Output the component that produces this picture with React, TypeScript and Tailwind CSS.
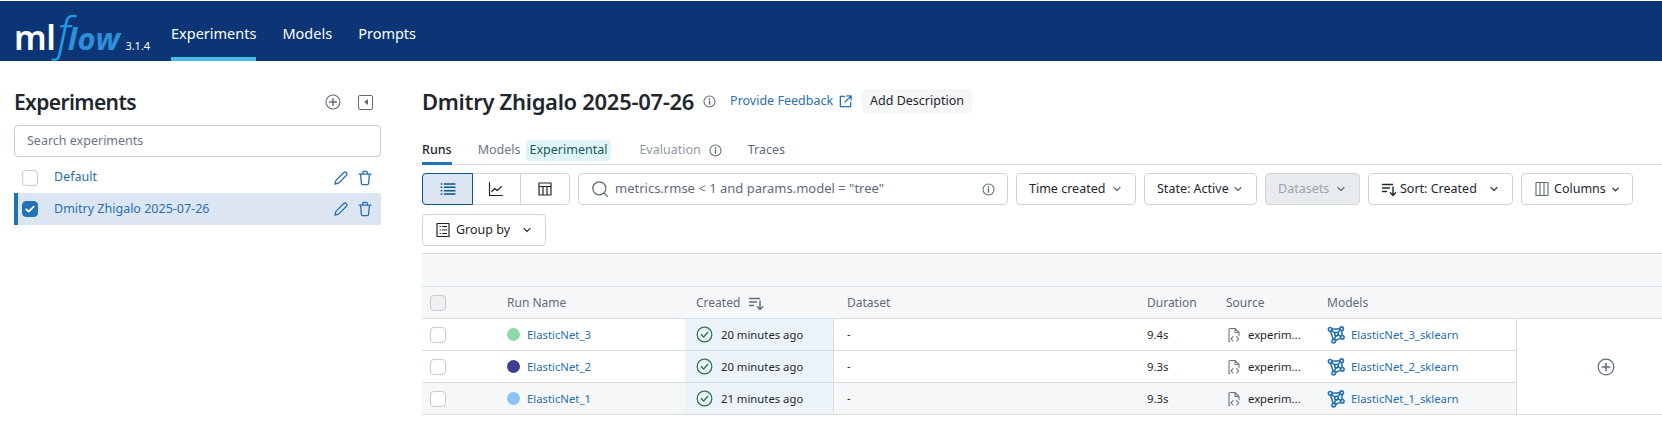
import React from "react";

const Ic = ({ s = 16, c = "currentColor", w = 1.4, children }: { s?: number; c?: string; w?: number; children: React.ReactNode }) => (
  <svg width={s} height={s} viewBox="0 0 16 16" fill="none" stroke={c} strokeWidth={w} strokeLinecap="round" strokeLinejoin="round" className="shrink-0">
    {children}
  </svg>
);

const PlusCircle = ({ s = 16 }: { s?: number }) => (
  <Ic s={s} c="#5f6b78" w={1.1}>
    <circle cx="8" cy="8" r="7" />
    <path d="M8 4.6v6.8M4.6 8h6.8" strokeWidth="1.4" />
  </Ic>
);
const Info = ({ c = "#5f6b78", s = 13 }: { c?: string; s?: number }) => (
  <Ic s={s} c={c} w={1.3}>
    <circle cx="8" cy="8" r="6.8" />
    <path d="M8 7.4v4M8 4.6v.6" strokeWidth="1.7" />
  </Ic>
);
const Chevron = ({ c = "#3f4a55", s = 12 }: { c?: string; s?: number }) => (
  <Ic s={s} c={c} w={1.8}>
    <path d="M4 6l4 4 4-4" />
  </Ic>
);
const Pencil = () => (
  <Ic s={16} c="#2a6fae" w={1.3}>
    <path d="M2 14l.9-3.6L10.8 2.5a1.6 1.6 0 0 1 2.3 0l.4.4a1.6 1.6 0 0 1 0 2.3L5.6 13.1 2 14z" />
  </Ic>
);
const Trash = () => (
  <Ic s={16} c="#2a6fae" w={1.3}>
    <path d="M2 4.2h12M5.6 4V2.8A1.5 1.5 0 0 1 7 1.3h2a1.5 1.5 0 0 1 1.4 1.5V4M3.6 4.4l.8 9a1.3 1.3 0 0 0 1.3 1.2h4.6a1.3 1.3 0 0 0 1.3-1.2l.8-9" />
  </Ic>
);
const SortIcon = ({ c = "#1f272d" }: { c?: string }) => (
  <Ic s={16} c={c} w={1.4}>
    <path d="M1.5 3.5h10M1.5 7h7M1.5 10.5h4M12 6v8.2M9.4 11.8l2.6 2.6 2.6-2.6" />
  </Ic>
);
const ModelIcon = () => (
  <Ic s={18} c="#2272b4" w={1.4}>
    <circle cx="2.8" cy="3" r="1.6" />
    <circle cx="13" cy="2.4" r="1.6" />
    <circle cx="8.4" cy="7.2" r="1.6" />
    <circle cx="13.6" cy="10" r="1.6" />
    <circle cx="6" cy="13.4" r="1.6" />
    <path d="M4.4 2.9l7-.4M4 4.2l3.2 1.9M11.8 3.6L9.5 6M9.9 8l2.3 1.2M7.7 8.8l-1.1 3M12.2 10.8l-4.7 2.1M3.2 4.6l2.3 7.2M13.1 4l.4 4.4" />
  </Ic>
);
const SourceIcon = () => (
  <Ic s={16} c="#6b7681" w={1.1}>
    <path d="M3 14.5V2.5a1 1 0 0 1 1-1h5l4 4v3M9 1.5v4h4" />
    <path d="M7 9.6L5 11.8l2 2.2M10.6 9.6l2 2.2-2 2.2M3 14.5h.8" />
  </Ic>
);
const StatusCheck = () => (
  <Ic s={17} c="#277c43" w={1.2}>
    <circle cx="8" cy="8" r="6.9" />
    <path d="M5 8.2l2.1 2.1L11 6.2" strokeWidth="1.3" />
  </Ic>
);

const Box = ({ checked = false, header = false }: { checked?: boolean; header?: boolean }) => (
  <span
    className={`flex h-4 w-4 items-center justify-center rounded-[4px] border ${
      checked ? "border-[#2272b4] bg-[#2272b4]" : header ? "border-[#c4ccd4] bg-[#eef0f2]" : "border-[#c4ccd4] bg-white"
    }`}
  >
    {checked && (
      <Ic s={12} c="#ffffff" w={2.4}>
        <path d="M3 8.4l3.2 3L13 4.8" />
      </Ic>
    )}
  </span>
);

const FilterBtn = ({ children, w, disabled = false }: { children: React.ReactNode; w: string; disabled?: boolean }) => (
  <div className={`flex h-8 items-center whitespace-nowrap rounded border border-[#cfd5db] ${w} ${disabled ? "bg-[#e8ebee] text-[#9aa3ac]" : "bg-white text-[#1f272d]"}`}>
    {children}
  </div>
);

const rows = [
  { name: "ElasticNet_3", color: "bg-[#8fd8a8]", time: "20 minutes ago", dur: "9.4s", model: "ElasticNet_3_sklearn", bg: "bg-white", h: "h-8 border-b" },
  { name: "ElasticNet_2", color: "bg-[#3c3f8f]", time: "20 minutes ago", dur: "9.3s", model: "ElasticNet_2_sklearn", bg: "bg-white", h: "h-8 border-b" },
  { name: "ElasticNet_1", color: "bg-[#8cc4f5]", time: "21 minutes ago", dur: "9.3s", model: "ElasticNet_1_sklearn", bg: "bg-[#f6f7f8]", h: "h-[31px]" },
];

export default function App() {
  return (
    <div className="h-[427px] w-[1662px] overflow-hidden bg-white text-[12.5px] text-[#1f272d]" style={{ fontFamily: '"Noto Sans", sans-serif' }}>
      <header className="flex h-[61px] items-stretch border-t border-white bg-[#0b3574] pl-[14px] text-white">
        <div className="flex w-[157px] items-baseline whitespace-nowrap pt-[12px]">
          <span className="text-[34px] font-semibold leading-[38px] tracking-[-0.5px]">ml</span>
          <span className="ml-[2px] text-[46px] font-light italic leading-[38px] text-[#1f9be2]">f</span>
          <span className="-ml-[3px] text-[31px] font-bold italic leading-[38px] tracking-[0.5px] text-[#2d90dc]">low</span>
          <span className="ml-[5px] text-[11px] leading-none">3.1.4</span>
        </div>
        <nav className="flex gap-[26px] text-[14.5px]">
          <a className="flex items-center border-b-4 border-[#43c0e8] pt-[9px]">Experiments</a>
          <a className="flex items-center border-b-4 border-transparent pt-[9px]">Models</a>
          <a className="flex items-center border-b-4 border-transparent pt-[9px]">Prompts</a>
        </nav>
      </header>

      <div className="flex">
        <aside className="w-[422px] shrink-0 pl-[14px] pr-[41px] pt-[26px]">
          <div className="flex h-[30px] items-center">
            <h2 className="flex-1 text-[21px] font-semibold leading-none tracking-[-0.6px]">Experiments</h2>
            <span className="mr-[17px]"><PlusCircle /></span>
            <span className="mr-[8px] flex h-[15px] w-[15px] items-center justify-center rounded-[2px] border-[1.5px] border-[#5f6b78]">
              <span className="h-0 w-0 border-y-[3.5px] border-r-[4px] border-y-transparent border-r-[#5f6b78]" />
            </span>
          </div>
          <div className="mt-[8px] flex h-8 items-center rounded border border-[#c4ccd4] px-3 pt-px text-[#6b7681]">Search experiments</div>
          <div className="mt-[4px]">
            <div className="flex h-8 items-center pl-2 pr-2 pt-px text-[#2a6fae]">
              <Box />
              <span className="ml-[16px] flex-1">Default</span>
              <Pencil />
              <span className="ml-2"><Trash /></span>
            </div>
            <div className="flex h-8 items-center border-l-4 border-[#2272b4] bg-[#dbe6f2] pl-1 pr-2 text-[#2a6fae]">
              <Box checked />
              <span className="ml-[16px] flex-1">Dmitry Zhigalo 2025-07-26</span>
              <Pencil />
              <span className="ml-2"><Trash /></span>
            </div>
          </div>
        </aside>

        <main className="min-w-0 flex-1">
          <div className="mt-[25px] flex h-[30px] items-center">
            <h1 className="text-[22px] font-semibold leading-none tracking-[-0.3px]">Dmitry Zhigalo 2025-07-26</h1>
            <span className="ml-[9px]"><Info /></span>
            <span className="ml-[14px] text-[#2a6fae]">Provide Feedback</span>
            <span className="ml-[5px]">
              <Ic s={15} c="#2272b4" w={1.4}>
                <path d="M7 2.5H2.5v11h11V9M9.5 2H14v4.5M14 2L7.5 8.5" />
              </Ic>
            </span>
            <span className="ml-[9px] flex h-6 items-center rounded bg-[#f5f6f7] px-2">Add Description</span>
          </div>

          <div className="mt-[21px] flex h-[28px] items-stretch gap-[26px] border-b border-[#d8dde2]">
            <span className="relative flex items-center font-medium">
              Runs
              <span className="absolute -bottom-px left-0 right-0 h-[3px] bg-[#2272b4]" />
            </span>
            <span className="flex items-center text-[#6b7681]">
              Models
              <span className="ml-[5px] rounded bg-[#e0f5f8] px-[4px] py-px text-[#1b5a5e]">Experimental</span>
            </span>
            <span className="ml-[2px] flex items-center gap-2 text-[#8f99a3]">Evaluation <Info s={13} /></span>
            <span className="flex items-center text-[#5f6b78]">Traces</span>
          </div>

          <div className="mt-2 flex flex-wrap items-center gap-x-2 gap-y-[9px]">
            <div className="flex h-8 w-[148px] rounded border border-[#cfd5db]">
              <span className="-m-px flex w-[51px] items-center justify-center rounded-l border border-[#0e538b] bg-[#dbe6f2]">
                <Ic s={18} c="#0e538b" w={1.4}><path d="M2 3.5h.4M4.8 3.5h9.4M2 6.5h.4M4.8 6.5h9.4M2 9.5h.4M4.8 9.5h9.4M2 12.5h.4M4.8 12.5h9.4" /></Ic>
              </span>
              <span className="flex w-[49px] items-center justify-center border-r border-[#cfd5db]">
                <Ic c="#1f272d" w={1.2}><path d="M1.5 1.5v13h13M3.8 10.5L6.8 7.5l2.3 2 4.2-3.8" /></Ic>
              </span>
              <span className="flex flex-1 items-center justify-center">
                <Ic c="#1f272d" w={1.2}><path d="M2 2h12v12H2zM2 5.5h12M6 5.5V14M10 5.5V14" /></Ic>
              </span>
            </div>
            <div className="flex h-8 w-[430px] items-center rounded border border-[#cfd5db] pl-3 pr-3">
              <Ic s={18} c="#5f6b78" w={1.1}><circle cx="7.4" cy="7.4" r="5.8" /><path d="M11.6 11.6l3 3" /></Ic>
              <span className="ml-[6px] flex-1 text-[13px] text-[#5f6b78]">metrics.rmse &lt; 1 and params.model = "tree"</span>
              <Info />
            </div>
            <FilterBtn w="w-[120px] justify-between px-3">Time created <Chevron c="#6b7681" /></FilterBtn>
            <FilterBtn w="w-[113px] justify-between px-3">State: Active <Chevron c="#6b7681" /></FilterBtn>
            <FilterBtn w="w-[95px] justify-between px-3" disabled>Datasets <Chevron c="#6b7681" /></FilterBtn>
            <FilterBtn w="w-[145px] gap-[3px] justify-between px-3"><SortIcon /><span className="flex-1">Sort: Created</span> <Chevron /></FilterBtn>
            <FilterBtn w="w-[112px] gap-1 pl-3">
              <Ic c="#5f6b78" w={1.1}><path d="M2 1.5h12v13H2zM6 1.5v13M10 1.5v13" /></Ic>
              Columns <Chevron c="#1f272d" s={11} />
            </FilterBtn>
            <FilterBtn w="w-[124px] gap-[5px] px-3">
              <Ic c="#1f272d" w={1.2}><path d="M2 1.5h12v13H2zM5 4.5h.6M7.5 4.5h4M5 8h.6M7.5 8h4M5 11.5h.6M7.5 11.5h4" /></Ic>
              <span className="flex-1">Group by</span> <Chevron />
            </FilterBtn>
          </div>

          <div className="mt-[7px] h-[33px] border-t border-[#d8dde2] bg-[#f6f7f8]" />
          <div className="flex h-[33px] items-center border-y border-[#d5dfe8] bg-[#f6f7f8] text-[12px] text-[#5f6b78]">
            <span className="flex w-[85px] pl-2"><Box header /></span>
            <span className="w-[189px]">Run Name</span>
            <span className="flex w-[151px] items-center gap-2">Created <SortIcon c="#5f6b78" /></span>
            <span className="w-[300px]">Dataset</span>
            <span className="w-[79px]">Duration</span>
            <span className="w-[101px]">Source</span>
            <span>Models</span>
          </div>
          <div className="flex border-b border-[#d8dde2] text-[11.3px]">
            <div className="w-[1094px]">
              {rows.map((r) => (
                <div key={r.name} className={`flex items-center border-[#d8dde2] ${r.h} ${r.bg}`}>
                  <span className="flex w-[85px] pl-2"><Box /></span>
                  <span className={`h-[13px] w-[13px] rounded-full ${r.color}`} />
                  <span className="ml-[7px] w-[158px] pt-px text-[#2a6fae]">{r.name}</span>
                  <span className="flex h-full w-[149px] items-center gap-2 border-r border-[#d8dde2] bg-[#ecf3f9] pl-[11px]">
                    <StatusCheck />
                    <span className="pt-px">{r.time}</span>
                  </span>
                  <span className="w-[313px] pl-[13px]">-</span>
                  <span className="w-[79px] pt-px">{r.dur}</span>
                  <span className="flex w-[101px] items-center gap-[6px]"><SourceIcon /><span className="pt-px">experim...</span></span>
                  <span className="flex items-center gap-[6px] text-[#2a6fae]"><ModelIcon /><span className="pt-px">{r.model}</span></span>
                </div>
              ))}
            </div>
            <div className="flex flex-1 items-center justify-center border-l border-[#d8dde2] pl-[32px]">
              <PlusCircle s={18} />
            </div>
          </div>
        </main>
      </div>
    </div>
  );
}
